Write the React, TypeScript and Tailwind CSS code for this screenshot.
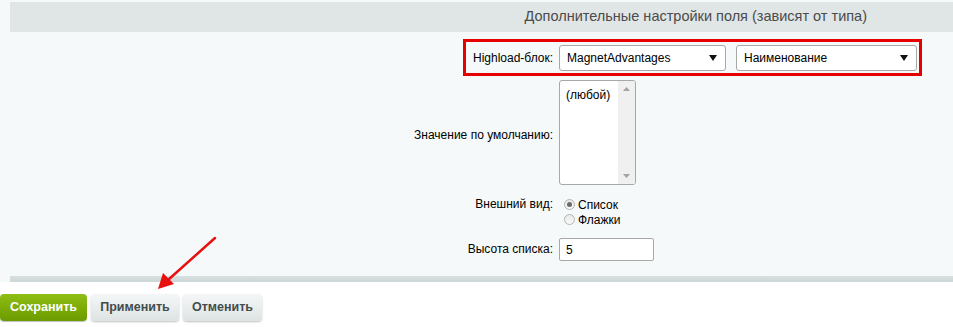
import React from "react";

const sans = "font-['Liberation_Sans',Arial,sans-serif]";

function FakeSelect({ value, width }: { value: string; width: string }) {
  return (
    <div
      className={`${width} h-[26px] flex items-center justify-between pl-[7px] pr-[8px] bg-white border border-[#a8a8a8] rounded-[3px] text-[12px] text-black`}
    >
      <span>{value}</span>
      <svg width="8" height="6" viewBox="0 0 8 6">
        <path d="M0 0 L8 0 L4 6 Z" fill="#111" />
      </svg>
    </div>
  );
}

function Radio({ checked, label }: { checked?: boolean; label: string }) {
  return (
    <div className="flex items-center gap-[3px] h-[15px]">
      <span className="w-[11px] h-[11px] rounded-full border border-[#b4b4b4] bg-gradient-to-b from-[#e9e9e9] to-[#fafafa] flex items-center justify-center">
        {checked && <span className="w-[5px] h-[5px] rounded-full bg-[#6a6a6a]" />}
      </span>
      <span className="text-[12px] text-black">{label}</span>
    </div>
  );
}

export default function App() {
  return (
    <div className={`${sans} relative w-[953px] h-[327px] bg-[#f5f9f9] flex flex-col overflow-hidden`}>
      <div className="pt-[2px] pl-[10px]">
        <div className="h-[30px] bg-[#e0e6e6] flex items-center justify-end pr-[86px] text-[14.5px] text-[#4b4b4b]">
          Дополнительные настройки поля (зависят от типа)
        </div>
      </div>

      <div className="pl-[10px] flex flex-col">
        <div className="flex pt-[7px]">
          <div className="w-[453px] shrink-0" />
          <div className="w-[459px] h-[37px] border-[3px] border-[#e60000] flex items-center pl-[7px] gap-[6px]">
            <span className="text-[12px] text-black w-[80px] whitespace-nowrap">Highload-блок:</span>
            <FakeSelect value="MagnetAdvantages" width="w-[167px]" />
            <FakeSelect value="Наименование" width="w-[181px] ml-[4px]" />
          </div>
        </div>

        <div className="grid grid-cols-[543px_1fr] gap-x-[6px] text-[12px] text-black">
          <div className="flex items-center justify-end h-[113px] pt-[4px]">Значение по умолчанию:</div>
          <div className="pt-[4px]">
            <div className="w-[77px] h-[105px] bg-white border border-[#a8a8a8] rounded-[3px] flex overflow-hidden">
              <div className="flex-1 pl-[6px] pt-[5px]">(любой)</div>
              <div className="w-[17px] bg-[#f0f0f0] flex flex-col items-center justify-between py-[6px]">
                <svg width="7" height="4" viewBox="0 0 7 4">
                  <path d="M0 4 L7 4 L3.5 0 Z" fill="#a3a3a3" />
                </svg>
                <svg width="7" height="4" viewBox="0 0 7 4">
                  <path d="M0 0 L7 0 L3.5 4 Z" fill="#a3a3a3" />
                </svg>
              </div>
            </div>
          </div>

          <div className="flex justify-end pt-[6px]">Внешний вид:</div>
          <div className="flex flex-col pt-[8px] pl-[5px]">
            <Radio checked label="Список" />
            <Radio label="Флажки" />
          </div>

          <div className="flex items-center justify-end h-[34px] pt-[10px]">Высота списка:</div>
          <div className="pt-[11px]">
            <div className="w-[95px] h-[23px] bg-white border border-[#a8a8a8] rounded-[2px] flex items-center pl-[6px]">
              5
            </div>
          </div>
        </div>
      </div>

      <div className="mt-auto">
        <div className="pl-[10px]">
          <div className="h-[6px] bg-gradient-to-b from-[#d8e0e0] to-[#cdd6d6]" />
        </div>
        <div className="bg-white h-[45px] flex items-start pt-[12px] gap-[4px]">
          <button className="h-[27px] w-[87px] rounded-[4px] bg-gradient-to-b from-[#8fbe13] to-[#6b9b00] text-white text-[12.5px] font-bold shadow-[0_1px_1px_rgba(0,0,0,0.25)]">
            Сохранить
          </button>
          <button className="h-[27px] w-[88px] rounded-[4px] bg-gradient-to-b from-[#f5f7f7] to-[#dde3e3] text-[#434d4d] text-[12.5px] font-bold shadow-[0_1px_2px_rgba(0,0,0,0.25)]">
            Применить
          </button>
          <button className="h-[27px] w-[79px] rounded-[4px] bg-gradient-to-b from-[#f5f7f7] to-[#dde3e3] text-[#434d4d] text-[12.5px] font-bold shadow-[0_1px_2px_rgba(0,0,0,0.25)]">
            Отменить
          </button>
        </div>
      </div>

      <svg className="absolute left-0 top-0 pointer-events-none" width="953" height="327">
        <line x1="215" y1="238" x2="168" y2="280" stroke="#e8110f" strokeWidth="2.5" strokeLinecap="round" />
        <path d="M158 289 L163 273 L174 284 Z" fill="#e8110f" />
      </svg>
    </div>
  );
}
